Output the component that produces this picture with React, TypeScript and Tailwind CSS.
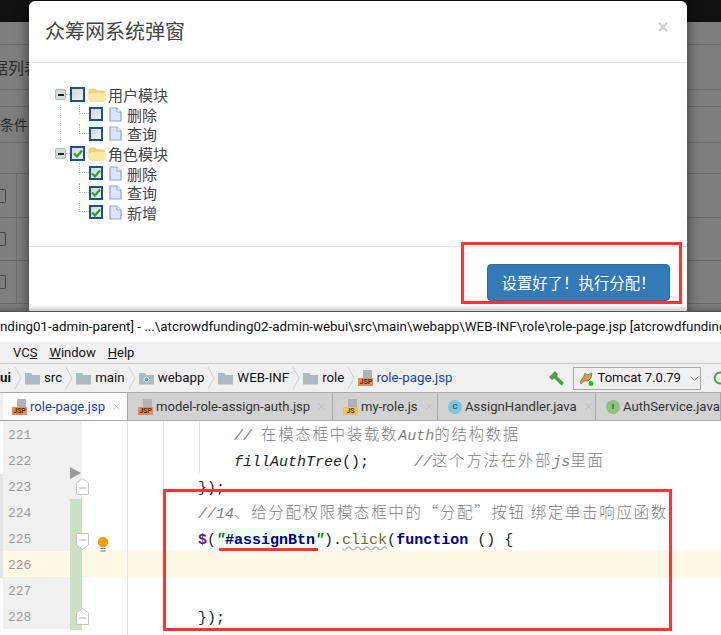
import type { ReactNode } from "react";
import { X } from "lucide-react";

const uiFont = '"Noto Sans CJK SC", "Noto Sans", sans-serif';
const ideFont = 'Roboto, "Noto Sans CJK SC", sans-serif';
const monoFont = '"Liberation Mono", "Noto Sans CJK SC", monospace';

const Minus = () => (
  <span className="flex h-[11px] w-[11px] shrink-0 items-center justify-center rounded-[2px] border border-[#a9bccb] bg-[#d9d9d9]">
    <span className="h-[2px] w-[6px] bg-[#222]" />
  </span>
);

const Check = ({ on, big }: { on: boolean; big?: boolean }) => (
  <span
    className={
      big
        ? "flex h-[15px] w-[15px] shrink-0 items-center justify-center border-2 border-[#1d5383] bg-gradient-to-br from-[#d6d6d6] to-[#f2f2f2]"
        : "flex h-[14px] w-[14px] shrink-0 items-center justify-center border-2 border-[#1d5383] bg-gradient-to-br from-[#d6d6d6] to-[#f2f2f2]"
    }
  >
    {on && (
      <svg width="10" height="9" viewBox="0 0 10 9">
        <path d="M1 4.5 L4 7.5 L9 1.5" fill="none" stroke="#22a52f" strokeWidth="2.2" />
      </svg>
    )}
  </span>
);

const Folder = () => (
  <svg width="18" height="14" viewBox="0 0 18 14" className="shrink-0">
    <path d="M1 3 Q1 1 3 1 H7 L9 3 H15 Q17 3 17 5 V12 Q17 13 15 13 H3 Q1 13 1 11 Z" fill="#f2d27a" stroke="#e6c873" />
    <path d="M1 6 Q6 4 17 5 V12 Q17 13 15 13 H3 Q1 13 1 11 Z" fill="#fbe9a6" />
  </svg>
);

const Page = () => (
  <svg width="13" height="15" viewBox="0 0 13 15" className="shrink-0">
    <path d="M1 1 H8 L12 5 V14 H1 Z" fill="#d9e6fa" stroke="#8fa3d0" strokeWidth="1.2" />
    <path d="M8 1 V5 H12" fill="#fff" stroke="#8fa3d0" />
  </svg>
);

const TreeParent = ({ on, label }: { on: boolean; label: string }) => (
  <div className="flex h-[19.6px] items-center">
    <Minus />
    <span className="w-[4px] border-b border-dotted border-[#bbb]" />
    <Check on={on} big />
    <span className="ml-[3px]">
      <Folder />
    </span>
    <span className="ml-[2px] text-[15px] leading-none text-[#444]">{label}</span>
  </div>
);

const TreeChild = ({ on, label }: { on: boolean; label: string }) => (
  <div className="flex h-[19.6px] items-center">
    <span className="mb-auto h-1/2 w-[10px] border-b border-l border-dotted border-[#bbb]" />
    <Check on={on} />
    <span className="ml-[6px]">
      <Page />
    </span>
    <span className="ml-[5px] text-[15px] leading-none text-[#444]">{label}</span>
  </div>
);

// faded page behind the modal, only the two edges show
const Backdrop = () => (
  <div className="flex h-[311px] flex-col bg-[#7e7e7e]">
    <div className="h-[22px] bg-[#111]" />
    <div className="h-[23px] border-b border-[#6c6c6c]" />
    <div className="flex h-[45px] items-center overflow-hidden border-b border-[#6c6c6c] text-[16px] text-[#2c2c2c]">
      <span className="ml-[-8px] whitespace-nowrap">据列表</span>
    </div>
    <div className="h-[17px] border-b border-[#6c6c6c]" />
    <div className="flex h-[36px] items-center border-b border-[#6c6c6c] text-[14px] text-[#2c2c2c]">条件</div>
    <div className="h-[31px] border-b border-[#6c6c6c]" />
    {[44, 43, 43].map((h, i) => (
      <div key={i} style={{ height: h }} className="flex items-center border-b border-[#666]">
        <span className="h-[14px] w-[6px] rounded-r-[2px] border-y border-r border-[#444]" />
        <span className="ml-[10px] h-full border-l border-[#6c6c6c]" />
      </div>
    ))}
  </div>
);

const Modal = () => (
  <div className="absolute left-[29px] top-[1px] flex h-[310px] w-[658px] flex-col rounded-t-[6px] bg-white shadow-[0_3px_14px_rgba(0,0,0,0.55)]">
    <div className="flex h-[62px] items-start justify-between border-b border-[#e5e5e5] pl-[16px] pr-[17px]">
      <span className="mt-[15px] text-[20px] leading-[30px] text-[#444]">众筹网系统弹窗</span>
      <X size={14} strokeWidth={4} className="mt-[19px] text-[#cfcfcf]" />
    </div>
    <div className="h-[183px] pl-[26px] pt-[22px]">
      <TreeParent on={false} label="用户模块" />
      <div className="ml-[5px] border-l border-dotted border-[#ccc] pl-[18px]">
        <TreeChild on={false} label="删除" />
        <TreeChild on={false} label="查询" />
      </div>
      <TreeParent on label="角色模块" />
      <div className="ml-[6px] pl-[18px]">
        <TreeChild on label="删除" />
        <TreeChild on label="查询" />
        <TreeChild on label="新增" />
      </div>
    </div>
    <div className="flex flex-1 justify-end border-t border-[#e5e5e5] pr-[17px] pt-[17px]">
      <button className="h-[37px] w-[183px] rounded-[4px] border border-[#2e6da4] bg-[#337ab7] text-[15.4px] text-white">
        设置好了！执行分配！
      </button>
    </div>
  </div>
);

const Chevron = () => (
  <svg width="10" height="24" viewBox="0 0 10 24" className="mx-[2px] shrink-0">
    <path d="M2 1 L8 12 L2 23" fill="none" stroke="#cfcfcf" />
  </svg>
);

const Crumb = ({ label, dot }: { label: string; dot?: boolean }) => (
  <>
    <svg width="15" height="13" viewBox="0 0 15 13" className="shrink-0">
      <path d="M0 1 H6 L7.5 3 H15 V12.5 H0 Z" fill="#aeb9c0" />
      {dot && <circle cx="7.5" cy="7.5" r="2.4" fill="#3fb0f0" stroke="#fff" />}
    </svg>
    <span className="ml-[4px] whitespace-nowrap">{label}</span>
    <Chevron />
  </>
);

const FileBadge = ({ label, color }: { label: string; color: string }) => (
  <span className="relative h-[16px] w-[15px] shrink-0">
    <span className="absolute right-[1px] top-0 h-[9px] w-[9px] bg-[#aeb4b8]" />
    <span
      className={
        color === "jsp"
          ? "absolute bottom-0 left-0 h-[8px] w-[15px] bg-[#ee8a55] text-center text-[7px] font-bold leading-[8px] text-[#4a2a10]"
          : "absolute bottom-0 left-0 h-[8px] w-[15px] bg-[#f0c060] text-center text-[7px] font-bold leading-[8px] text-[#4a3a10]"
      }
    >
      {label}
    </span>
  </span>
);

const Tab = ({ width, active, icon, label, close = true }: { width: number; active?: boolean; icon: ReactNode; label: string; close?: boolean }) => (
  <div
    style={{ width }}
    className={
      active
        ? "flex h-full shrink-0 items-center border-r border-[#aaa] bg-white pl-[9px] text-[#1c3fa8]"
        : "flex h-full shrink-0 items-center border-r border-[#aaa] bg-[#d2d2d2] pl-[10px] text-[#333]"
    }
  >
    {icon}
    <span className="ml-[3px] whitespace-nowrap">{label}</span>
    {close && <X size={11} strokeWidth={1.2} className="ml-[6px] shrink-0 text-[#a8a8a8]" />}
  </div>
);

const Circle = ({ letter, bg }: { letter: string; bg: string }) => (
  <span
    className={
      bg === "c"
        ? "flex h-[14px] w-[14px] shrink-0 items-center justify-center rounded-full bg-[#7cc4e2] text-[8px] font-bold text-[#2e5f78]"
        : "flex h-[14px] w-[14px] shrink-0 items-center justify-center rounded-full bg-[#8fc27c] text-[8px] font-bold text-[#2d5a22]"
    }
  >
    {letter}
  </span>
);

const Zh = ({ children }: { children: ReactNode }) => (
  <span className="text-[15.5px] font-light not-italic leading-none tracking-[1.65px]" style={{ fontFamily: '"Noto Sans CJK SC", sans-serif' }}>
    {children}
  </span>
);

const lines: { n: number; indent: number; code?: ReactNode }[] = [
  {
    n: 221,
    indent: 234,
    code: (
      <span className="italic text-[#808080]">
        // <Zh>在模态框中装载数</Zh>Auth<Zh>的结构数据</Zh>
      </span>
    ),
  },
  {
    n: 222,
    indent: 234,
    code: (
      <>
        <span className="italic">fillAuthTree</span>();{"     "}
        <span className="italic text-[#808080]">
          //<Zh>这个方法在外部</Zh>js<Zh>里面</Zh>
        </span>
      </>
    ),
  },
  { n: 223, indent: 198, code: <>{"});"}</> },
  {
    n: 224,
    indent: 198,
    code: (
      <span className="italic text-[#808080]">
        //14<Zh>、给分配权限模态框中的“分配”按钮 绑定单击响应函数</Zh>
      </span>
    ),
  },
  {
    n: 225,
    indent: 198,
    code: (
      <>
        <span className="font-bold text-[#660e7a]">$</span>(
        <span className="font-bold italic text-[#008000]">"</span>
        <span className="inline-block bg-[#edfcee] font-bold text-[#000080]">#assignBtn</span>
        <span className="font-bold italic text-[#008000]">"</span>
        ).<span className="text-[#6b6b2a] underline decoration-[#bbb] decoration-wavy">click</span>(
        <span className="font-bold text-[#000080]">function</span> () {"{"}
      </>
    ),
  },
  { n: 226, indent: 198 },
  { n: 227, indent: 198 },
  { n: 228, indent: 198, code: <>{"});"}</> },
];

const FoldMark = ({ top, up }: { top: number; up?: boolean }) => (
  <svg width="13" height="17" viewBox="0 0 13 17" className="absolute left-[76px]" style={{ top }}>
    <path d={up ? "M.5 5 L6.5 .5 L12.5 5 V16.5 H.5 Z" : "M.5 .5 H12.5 V12 L6.5 16.5 L.5 12 Z"} fill="#fff" stroke="#c4c4c4" />
    <path d={up ? "M3 10 H10" : "M3 7 H10"} stroke="#aaa" />
  </svg>
);

const Editor = () => (
  <div className="relative h-[215px] overflow-hidden bg-white" style={{ fontFamily: monoFont }}>
    {lines.map((l) => (
      <div key={l.n} className={l.n === 226 ? "flex h-[26px] bg-[#fef9e4]" : "flex h-[26px]"}>
        <div className={l.n === 226 ? "ml-[3px] w-[79px] shrink-0 bg-[#fef9e4] pl-[5px] text-[13px] leading-[29px] text-[#9a9a9a]" : "ml-[3px] w-[79px] shrink-0 bg-[#f0f0f0] pl-[5px] text-[13px] leading-[29px] text-[#9a9a9a]"}>
          {l.n}
        </div>
        <div
          style={{ paddingLeft: l.indent - 82 }}
          className="whitespace-pre pt-[3px] text-[15px] leading-[26px] text-[#222]"
        >
          {l.code}
        </div>
      </div>
    ))}
    {/* gutter marks and guides on top of the rows */}
    <div className="absolute left-0 top-[53px] h-[104px] w-[3px] bg-[#e4e4e4]" />
    <div className="absolute left-[70px] top-[78px] h-[131px] w-[12px] bg-[#cde0c5]" />
    <div className="absolute left-[127px] top-0 h-full w-px bg-[#e6e6e6]" />
    <div className="absolute left-[163px] top-0 h-full w-px bg-[#e6e6e6]" />
    <div className="absolute left-[199px] top-0 h-[52px] w-px bg-[#e6e6e6]" />
    <svg width="11" height="12" viewBox="0 0 11 12" className="absolute left-[70px] top-[46px]">
      <path d="M0 0 L11 6 L0 12 Z" fill="#9a9a9a" />
    </svg>
    <FoldMark top={57} up />
    <FoldMark top={112} />
    <FoldMark top={187} up />
    <svg width="12" height="17" viewBox="0 0 12 17" className="absolute left-[97px] top-[115px]">
      <circle cx="6" cy="6" r="5.2" fill="#f2a100" />
      <path d="M3.5 12 H8.5 V13 H3.5 Z M3.5 14.5 H8.5 V15.5 H3.5 Z" fill="#777" />
    </svg>
    <div className="absolute left-[219px] top-[127px] h-[3px] w-[99px] bg-[#f33]" />
  </div>
);

export default function App() {
  return (
    <div className="relative h-[635px] w-[721px] overflow-hidden bg-white" style={{ fontFamily: uiFont }}>
      <div className="relative h-[311px] overflow-hidden">
        <Backdrop />
        <Modal />
        <div className="absolute bottom-0 left-0 h-[6px] w-full bg-gradient-to-b from-transparent to-black/20" />
      </div>

      <div style={{ fontFamily: ideFont }}>
        <div className="h-[31px] overflow-hidden whitespace-nowrap border-t border-[#555] bg-white text-[13.35px] leading-[29px] text-[#111]">
          nding01-admin-parent] - ...\atcrowdfunding02-admin-webui\src\main\webapp\WEB-INF\role\role-page.jsp [atcrowdfunding
        </div>

        <div className="flex h-[21px] items-center bg-[#f0f0f0] pl-[13px] text-[13px] text-[#111]">
          <span>
            VC<span className="underline">S</span>
          </span>
          <span className="ml-[12px]">
            <span className="underline">W</span>indow
          </span>
          <span className="ml-[12px]">
            <span className="underline">H</span>elp
          </span>
        </div>

        <div className="flex h-[29px] items-center overflow-hidden border-t border-[#c8c8c8] bg-[#f0f0f0] text-[13.3px] text-[#111]">
          <span className="font-bold">ui</span>
          <Chevron />
          <Crumb label="src" />
          <Crumb label="main" />
          <Crumb label="webapp" dot />
          <Crumb label="WEB-INF" />
          <Crumb label="role" />
          <FileBadge label="JSP" color="jsp" />
          <span className="ml-[3px] whitespace-nowrap text-[#1c3fa8]">role-page.jsp</span>
          <svg width="15" height="15" viewBox="0 0 15 15" className="ml-[96px] shrink-0">
            <path d="M0 6 L6 0 L9 3 L8 5 L15 12 L12.5 14.5 L5.5 7.5 L3 9 Z" fill="#4f9d4f" />
          </svg>
          <div className="ml-[9px] flex h-[23px] w-[128px] shrink-0 items-center border border-[#aaa] pl-[5px] text-[13px]">
            <svg width="15" height="15" viewBox="0 0 15 15" className="shrink-0">
              <path d="M1 11 L5 5 L6 2 L8 4 L11 3 L13 2 L12 7 L9 10 L5 10 L2 13 Z" fill="#c8a040" stroke="#555" strokeWidth=".6" />
              <circle cx="12" cy="12.5" r="2.4" fill="#18c018" />
            </svg>
            <span className="ml-[4px] whitespace-nowrap">Tomcat 7.0.79</span>
            <svg width="9" height="5" viewBox="0 0 9 5" className="ml-[9px] shrink-0">
              <path d="M.5 .5 L4.5 4.5 L8.5 .5" fill="none" stroke="#888" />
            </svg>
          </div>
          <svg width="14" height="14" viewBox="0 0 14 14" className="ml-[12px] shrink-0">
            <path d="M11 11 A5.5 5.5 0 1 1 11 3" fill="none" stroke="#4f9d4f" strokeWidth="2" />
          </svg>
        </div>

        <div className="flex h-[29px] border-y border-[#aaa] bg-[#f0f0f0] pl-[3px] text-[13.1px]">
          <Tab width={125} active icon={<FileBadge label="JSP" color="jsp" />} label="role-page.jsp" />
          <Tab width={205} icon={<FileBadge label="JSP" color="jsp" />} label="model-role-assign-auth.jsp" />
          <Tab width={105} icon={<FileBadge label="JS" color="js" />} label="my-role.js" />
          <Tab width={158} icon={<Circle letter="C" bg="c" />} label="AssignHandler.java" />
          <Tab width={125} icon={<Circle letter="I" bg="i" />} label="AuthService.java" close={false} />
        </div>
      </div>

      <Editor />

      {/* red annotation boxes drawn over the screenshot */}
      <div className="absolute left-[461px] top-[242px] h-[62px] w-[221px] border-[3px] border-[#f33]" />
      <div className="absolute left-[163px] top-[489px] h-[142px] w-[509px] border-[3px] border-[#f33]" />
    </div>
  );
}
